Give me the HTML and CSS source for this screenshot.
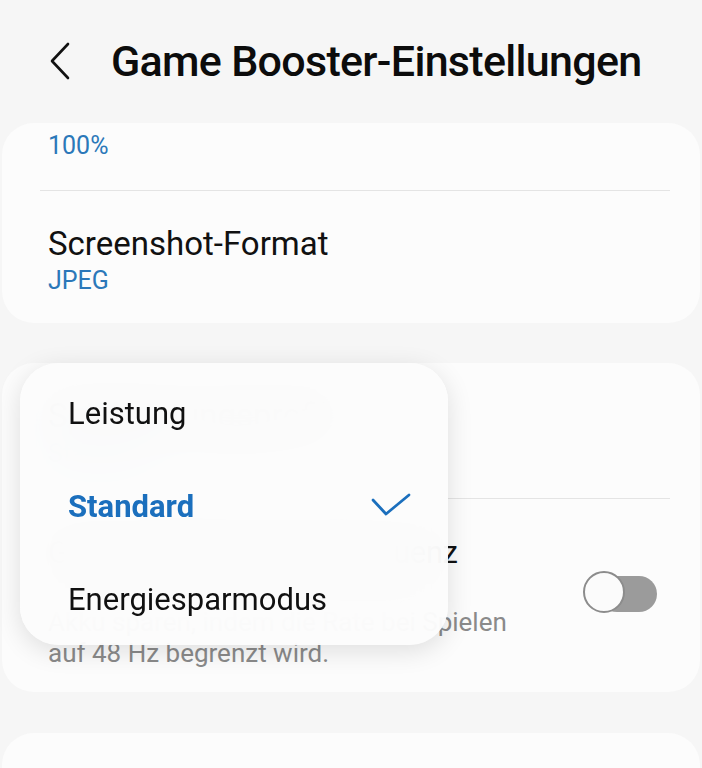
FILE: index.html
```html
<!DOCTYPE html>
<html lang="de"><head>
<meta charset="utf-8">
<link rel="stylesheet" href="styles.css">
</head>
<body>

<div class="header">
	<svg class="back" width="24" height="40" viewBox="0 0 24 40"><path d="M20 3 L4 20 L20 37" fill="none" stroke="#111" stroke-width="2.6" stroke-linecap="round" stroke-linejoin="round"/></svg>
	<h1>Game Booster-Einstellungen</h1>
</div>

<div class="list">
	<div class="card first">
		<div class="row top">
			<div class="sub">100%</div>
		</div>
		<div class="divider"></div>
		<div class="row">
			<div class="title">Screenshot-Format</div>
			<div class="sub">JPEG</div>
		</div>
	</div>

	<div class="card second">
		<div class="row perf">
			<div class="title">Spielleistungsprofil</div>
			<div class="sub">Standard</div>
		</div>
		<div class="divider"></div>
		<div class="row switchrow">
			<div class="text">
				<div class="title narrow">Geringe Bildwiederholfrequenz</div>
				<div class="desc">Akku sparen, indem die Rate bei Spielen<br>auf 48 Hz begrenzt wird.</div>
			</div>
			<div class="switch"><span class="knob"></span></div>
		</div>

		<div class="popup">
			<div class="item">Leistung</div>
			<div class="item selected">Standard
				<svg class="check" width="42" height="28" viewBox="0 0 42 28"><path d="M3 8 L16 22 L39 3" fill="none" stroke="#1b6fbd" stroke-width="2.8" stroke-linecap="round" stroke-linejoin="round"/></svg>
			</div>
			<div class="item">Energiesparmodus</div>
		</div>
	</div>

	<div class="card third"></div>
</div>

</body>
</html>
```

FILE: styles.css
```css
body
{
	margin: 0;
	background-color: #f6f6f6;
	font-family: Roboto, "Noto Sans", sans-serif;
	color: #111;
	width: 702px;
	height: 768px;
	overflow: hidden;
}
.header
{
	height: 123px;
	display: flex;
	align-items: center;
	padding-left: 48px;
	box-sizing: border-box;
}
.back
{
	margin-top: -2px;
}
h1
{
	margin: 0 0 0 39px;
	font-size: 43px;
	font-weight: 500;
	letter-spacing: -0.7px;
	color: #0c0c0c;
	margin-top: -2px;
}
.list
{
	padding: 0 2px;
	display: flex;
	flex-direction: column;
	gap: 40px;
}
.card
{
	background-color: #fcfcfc;
	border-radius: 32px;
	position: relative;
}
.first
{
	height: 200px;
}
.second
{
	height: 329px;
}
.third
{
	height: 120px;
	margin-top: 1px;
}
.row
{
	padding: 0 46px;
}
.row.top
{
	height: 67px;
	padding-top: 8px;
	box-sizing: border-box;
}
.divider
{
	height: 1px;
	background-color: #e4e4e4;
	margin: 0 30px 0 38px;
}
.title
{
	font-size: 33px;
	line-height: 38px;
	color: #111;
}
.title.narrow
{
	font-size: 31px;
	letter-spacing: -0.4px;
}
.sub
{
	font-size: 25px;
	line-height: 30px;
	color: #2b78b9;
}
.first .row:last-child
{
	padding-top: 34px;
}
.first .row:last-child .sub
{
	margin-top: 3px;
}
.row.perf
{
	height: 135px;
	padding-top: 34px;
	box-sizing: border-box;
}
.row.perf .sub
{
	margin-top: 4px;
}
.switchrow
{
	display: flex;
	align-items: flex-start;
	justify-content: space-between;
	padding-top: 35px;
	padding-right: 43px;
}
.desc
{
	font-size: 26px;
	line-height: 31px;
	color: #8a8a8a;
	margin-top: 35px;
}
.switch
{
	position: relative;
	width: 58px;
	height: 36px;
	background-color: #9b9b9b;
	border-radius: 18px;
	margin-top: 42px;
}
.knob
{
	position: absolute;
	left: -16px;
	top: -5px;
	width: 38px;
	height: 38px;
	border: 2px solid #8c8c8c;
	border-radius: 50%;
	background-color: #fbfbfb;
}
.popup
{
	position: absolute;
	top: 0;
	left: 18px;
	width: 428px;
	height: 282px;
	padding-top: 4px;
	box-sizing: border-box;
	border-radius: 38px;
	background-color: rgba(252, 252, 252, 0.94);
	backdrop-filter: blur(26px);
	box-shadow: 0 6px 26px rgba(0, 0, 0, 0.12);
}
.item
{
	height: 93px;
	display: flex;
	align-items: center;
	justify-content: space-between;
	padding: 0 36px 0 48px;
	font-size: 31px;
	color: #111;
}
.item.selected
{
	color: #1b6fbd;
	font-weight: 700;
}
.check
{
	margin-top: -2px;
}
```
